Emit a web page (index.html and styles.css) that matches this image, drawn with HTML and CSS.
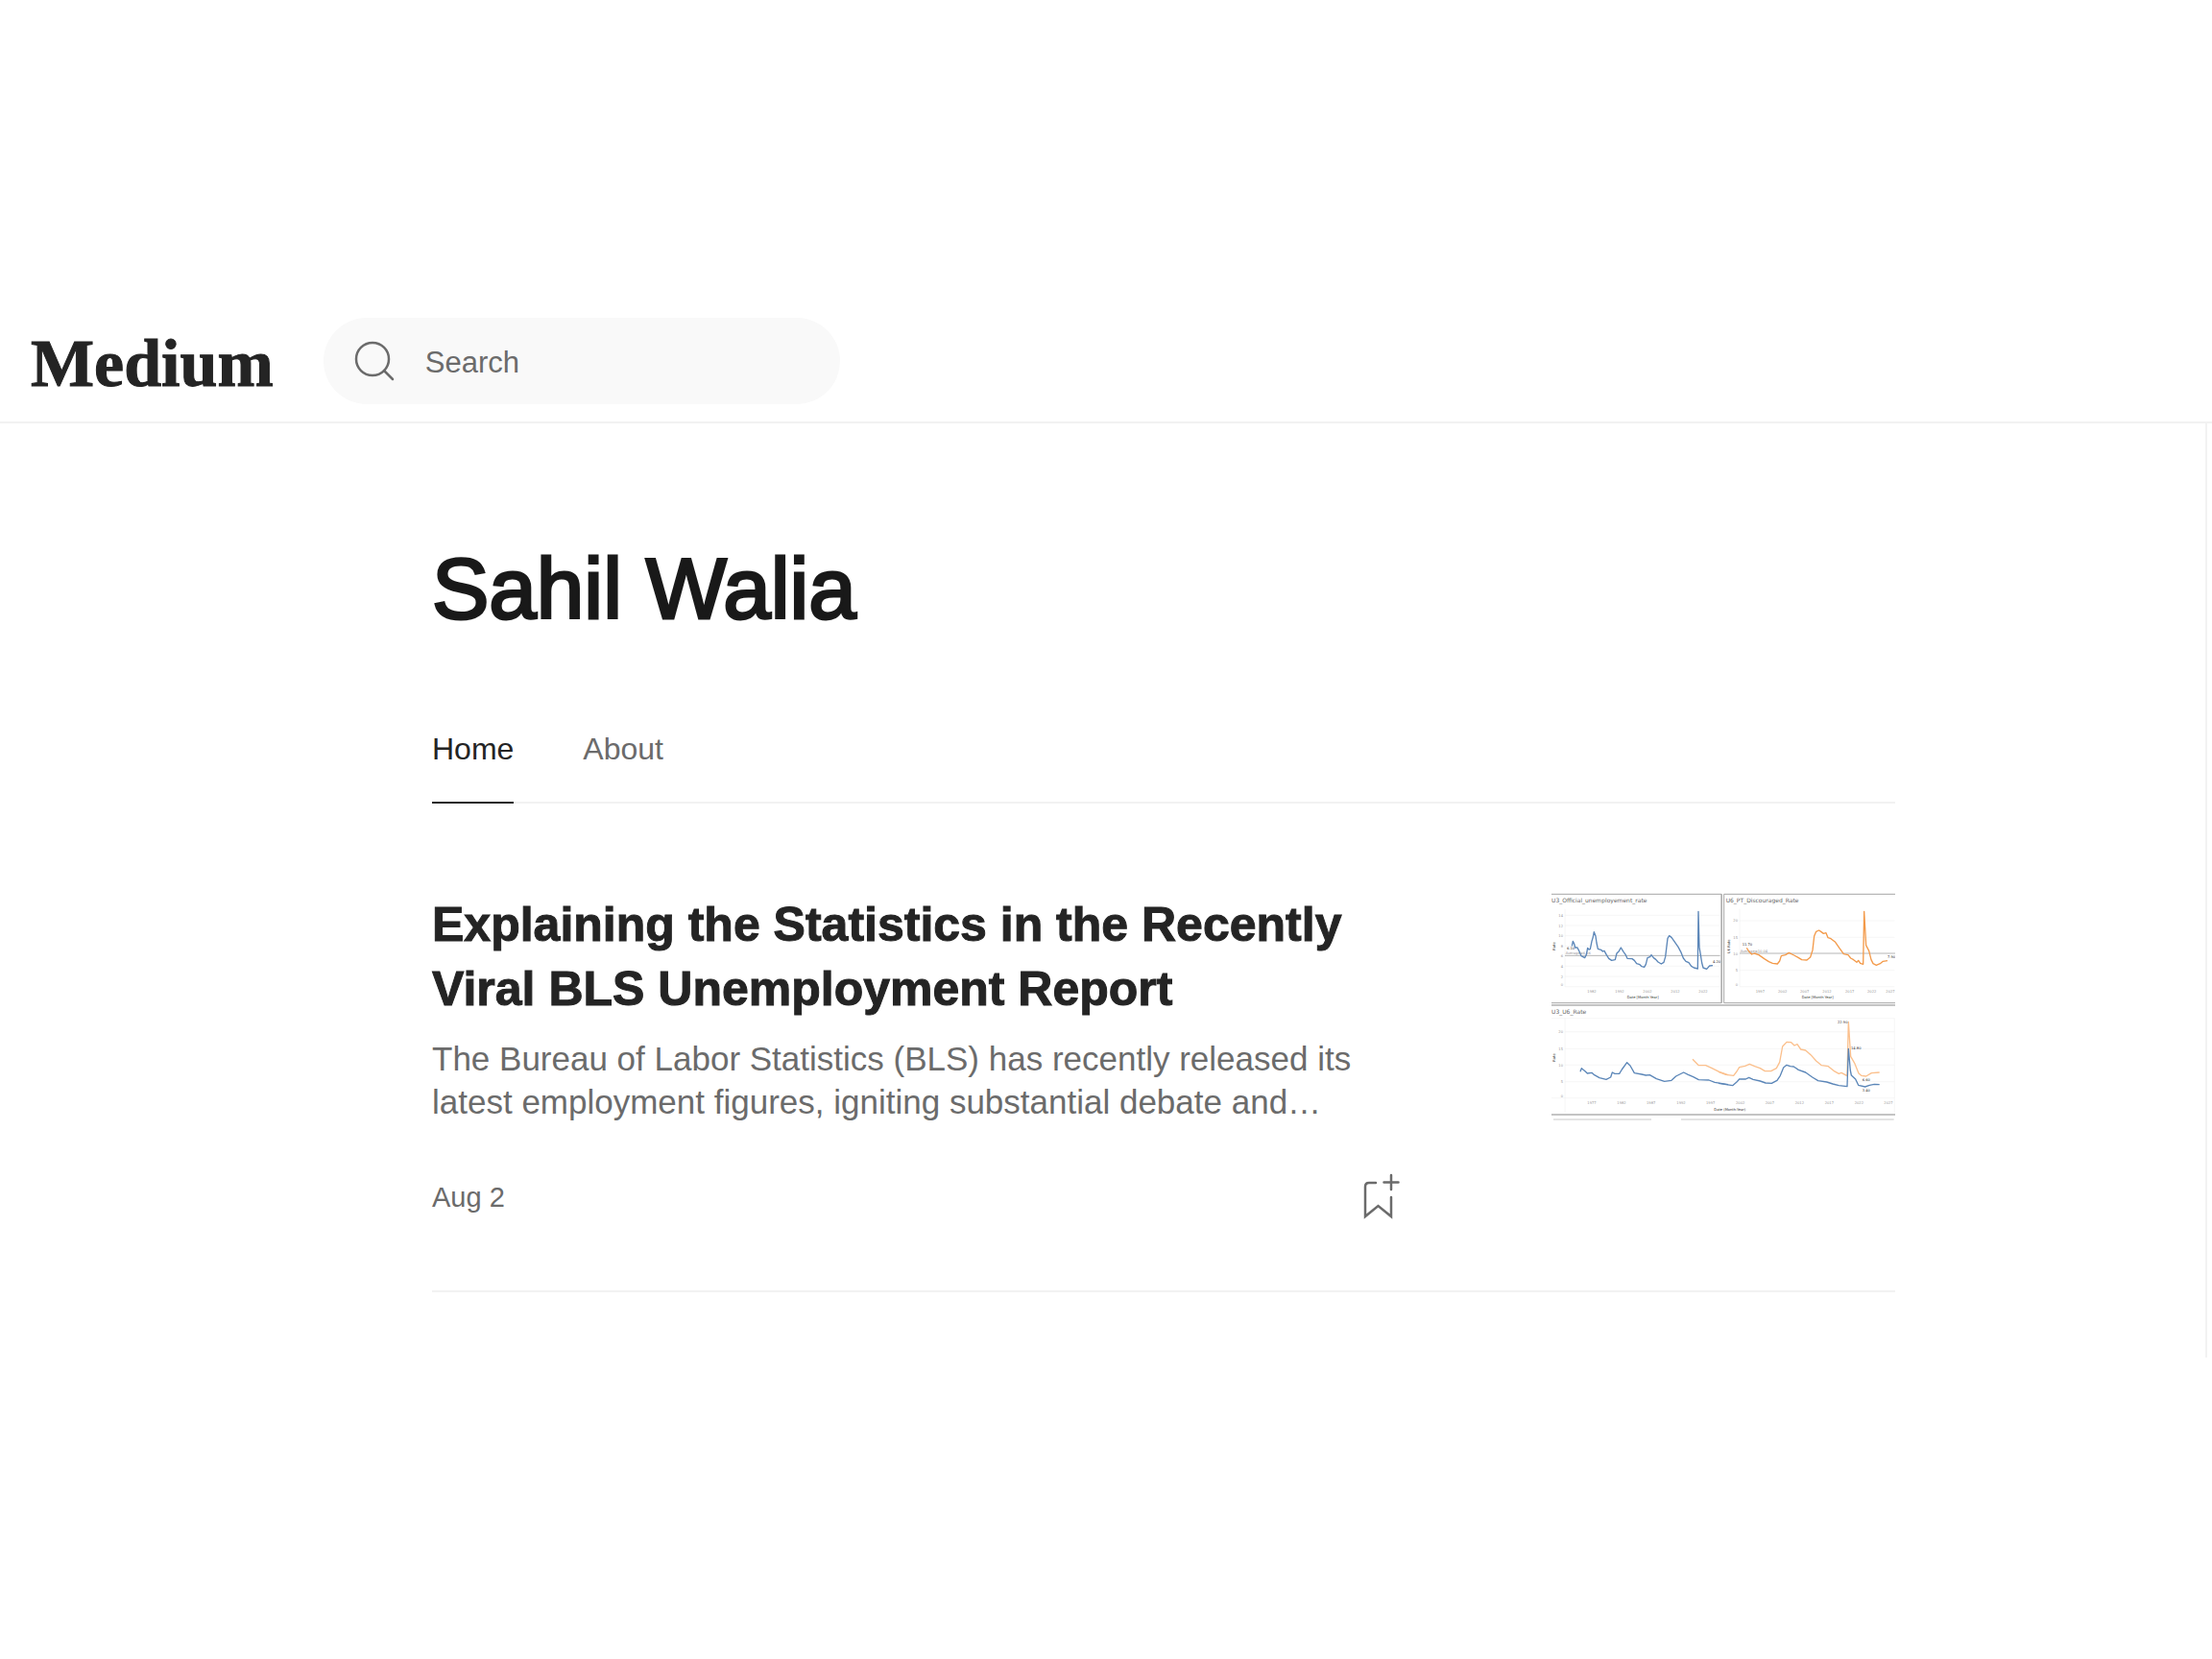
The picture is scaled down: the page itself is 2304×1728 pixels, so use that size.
FILE: index.html
```html
<!DOCTYPE html>
<html lang="en">
<head>
<meta charset="utf-8">
<title>Sahil Walia – Medium</title>
<link rel="stylesheet" href="styles.css">
</head>
<body>
<header class="topbar">
  <a class="wordmark" href="#">Medium</a>
  <label class="search">
    <svg class="search-icon" viewBox="0 0 42 42" aria-hidden="true"><circle cx="19" cy="19" r="17"/><path d="M31 31l9 9"/></svg>
    <input class="search-input" type="search" placeholder="Search" aria-label="Search">
  </label>
</header>
<main class="profile">
  <h1 class="name">Sahil Walia</h1>
  <nav class="tabs">
    <a class="tab tab-active" href="#" aria-current="page">Home</a>
    <a class="tab" href="#">About</a>
  </nav>
  <article class="story">
    <div class="story-text">
      <h2 class="story-title">Explaining the Statistics in the Recently<br>Viral BLS Unemployment Report</h2>
      <p class="story-summary">The Bureau of Labor Statistics (BLS) has recently released its<br>latest employment figures, igniting substantial debate and…</p>
      <div class="story-meta">
        <time datetime="08-02">Aug 2</time>
        <button class="save" type="button" aria-label="Save story">
          <svg viewBox="0 0 40 50" aria-hidden="true"><path d="M15 10H8q-4 0-4 4v31L17.500 34 31 45V25M31 2v15M23.500 9.500h15"/></svg>
        </button>
      </div>
    </div>
    <svg class="thumb" viewBox="0 0 1074 714" role="img" aria-label="Unemployment rate charts">
      <!-- U3 chart -->
      <g transform="translate(-48 -30)">
        <path class="frame" d="M48 34H579V374H48"/>
        <path class="grid" d="M90 100H575M90 132H575M90 164H575M90 196H575M90 259H575M90 291H575M90 323H575M90 80V323"/>
        <path class="avg" d="M90 226H575"/>
        <text class="head" x="48" y="60">U3_Official_unemployement_rate</text>
        <g class="tick"><text x="70" y="105">14</text><text x="70" y="137">12</text><text x="70" y="169">10</text><text x="77" y="201">8</text><text x="77" y="232">6</text><text x="77" y="264">4</text><text x="77" y="296">2</text><text x="77" y="320">0</text>
        <text x="160" y="341">1982</text><text x="247" y="341">1992</text><text x="334" y="341">2002</text><text x="421" y="341">2012</text><text x="508" y="341">2022</text></g>
        <g class="note"><text x="284" y="361">Date [Month Year]</text><text x="96" y="206">6.10</text><text class="faint" x="92" y="221">Average=6.16</text><text x="552" y="249">4.20</text><text transform="translate(61 209) rotate(-90)">Rate</text></g>
        <path class="blue" d="M112 196L115 181 119 189 122 201 129 201 134 211 141 227 152 233 157 223 161 202 165 207 169 206 174 181 178 168 181 152 186 165 189 186 193 205 203 208 208 213 213 211 220 224 227 235 236 241 247 239 252 219 259 212 265 201 273 214 280 224 285 235 300 236 307 241 314 251 324 254 330 260 338 262 343 253 348 233 356 230 360 224 367 233 374 238 381 246 391 252 399 247 404 230 407 205 411 172 416 164 423 169 432 182 444 199 452 214 460 234 468 244 477 248 485 259 493 264 505 267 507 88 510 200 514 224 518 249 522 264 533 268 542 258 552 257"/>
      </g>
      <!-- U6 chart -->
      <g transform="translate(522 -30)">
        <path class="frame" d="M10 34V374M554 34H17V374H554"/>
        <path class="grid" d="M66 117H550M66 169H550M66 272H550M66 323H550M66 80V323"/>
        <path class="avg" d="M66 219H552"/>
        <text class="head" x="23" y="60">U6_PT_Discouraged_Rate</text>
        <g class="tick"><text x="46" y="121">20</text><text x="46" y="173">15</text><text x="46" y="224">10</text><text x="53" y="276">5</text><text x="53" y="320">0</text>
        <text x="116" y="341">1997</text><text x="186" y="341">2002</text><text x="255" y="341">2007</text><text x="325" y="341">2012</text><text x="396" y="341">2017</text><text x="465" y="341">2022</text><text x="523" y="341">2027</text></g>
        <g class="note"><text x="260" y="361">Date [Month Year]</text><text x="74" y="196">11.70</text><text class="faint" x="68" y="215">Average=10.04</text><text x="528" y="234">7.90</text><text transform="translate(37 219) rotate(-90)">U6 Rate</text></g>
        <path class="orange" d="M88 202L95 213 104 222 112 219 126 224 143 236 157 245 169 250 184 252 191 243 196 227 209 224 220 217 236 225 249 232 260 239 276 240 287 231 294 209 299 165 305 151 314 147 321 152 328 157 336 155 342 170 351 173 365 184 378 203 391 221 405 224 413 234 422 239 432 247 437 241 443 250 452 253 455 88 461 194 470 211 477 239 483 251 493 256 505 251 514 244 528 242"/>
      </g>
      <path class="bar" d="M0 351H1074M0 693H1074"/>
      <path class="bar-light" d="M6 708H312M405 708H1070"/>
      <!-- Combined chart, left and right halves -->
      <g transform="translate(-48 330)">
        <path class="grid" d="M48 62H1120M90 104H1120M90 157H1120M90 208H1120M90 260H1120M48 311H1120M90 62V358M1120 62V358"/>
        <text class="head" x="48" y="48">U3_U6_Rate</text>
        <g class="tick"><text x="70" y="109">20</text><text x="70" y="161">15</text><text x="70" y="213">10</text><text x="77" y="264">5</text><text x="77" y="308">0</text>
        <text x="160" y="329">1977</text><text x="253" y="329">1982</text><text x="345" y="329">1987</text><text x="439" y="329">1992</text><text x="531" y="329">1997</text></g>
        <g class="note"><text x="556" y="350">Date (Month-Year)</text><text transform="translate(61 197) rotate(-90)">Rate</text></g>
        <path class="blue" d="M138 229L142 218 153 227 160 234 174 232 182 239 198 248 219 253 233 246 238 231 246 235 260 235 268 222 284 200 294 210 307 233 330 237 343 240 355 239 376 251 401 259 423 256 437 243 461 231 475 238 491 245 508 254 540 255 558 262 600 269"/>
        <path class="peach" d="M489 190L508 209 530 209 548 217 572 229 600 239"/>
      </g>
      <g transform="translate(522 330)">
        <g class="tick"><text x="54" y="329">2002</text><text x="146" y="329">2007</text><text x="239" y="329">2012</text><text x="332" y="329">2017</text><text x="425" y="329">2022</text><text x="517" y="329">2027</text></g>
        <path class="peach" d="M0 229L23 238 47 241 57 228 65 215 83 211 97 205 113 212 130 218 145 227 164 227 181 218 191 199 200 150 213 136 227 137 237 147 246 143 257 159 272 162 288 176 305 195 322 209 343 212 360 226 376 235 384 232 402 242 406 73 413 181 425 202 438 234 446 241 461 243 478 233 503 231"/>
        <path class="blue" d="M0 265L24 269 44 272 56 262 65 252 85 252 95 247 108 253 130 258 147 264 166 265 183 256 193 241 203 216 213 208 224 212 235 213 250 223 272 231 293 246 311 257 338 261 357 267 376 272 402 275 406 157 412 225 415 240 428 252 437 271 458 276 472 271 487 268 503 269"/>
        <g class="note"><text x="372" y="78">22.90</text><text x="414" y="159">14.80</text><text x="449" y="259">6.60</text><text x="449" y="292">3.40</text></g>
      </g>
    </svg>
  </article>
</main>
</body>
</html>
```
FILE: styles.css
```css
* { box-sizing: border-box; }
body {
  margin: 0;
  padding-top: 313px;
  background: #fff;
  color: #242424;
  font-family: "Liberation Sans", Arial, sans-serif;
}
a { color: inherit; text-decoration: none; }
.topbar {
  display: flex;
  align-items: center;
  gap: 52px;
  padding: 18px 32px;
  border-bottom: 2px solid #f2f2f2;
}
.wordmark {
  padding-top: 6px;
  font: bold 70px/84px "Liberation Serif", "Times New Roman", serif;
  -webkit-text-stroke: 1px #242424;
}
.search {
  display: flex;
  align-items: center;
  gap: 32px;
  width: 538px;
  height: 90px;
  padding: 0 32px;
  border-radius: 45px;
  background: #f9f9f9;
}
.search-icon {
  flex: none;
  width: 42px;
  height: 42px;
  fill: none;
  stroke: #6b6b6b;
  stroke-width: 2.500;
  stroke-linecap: round;
}
.search-input {
  flex: 1;
  min-width: 0;
  padding: 4px 0 0;
  border: 0;
  outline: 0;
  background: none;
  color: #242424;
  font: 31px/44px "Liberation Sans", Arial, sans-serif;
}
.search-input::placeholder { color: #6b6b6b; opacity: 1; }
.profile {
  margin-right: 5px;
  padding: 120px 323px 68px 450px;
  border-right: 2px solid #f2f2f2;
}
.name {
  margin: 0;
  color: #191919;
  font-size: 89px;
  font-weight: 400;
  line-height: 104px;
  -webkit-text-stroke: 3px #191919;
}
.tabs {
  display: flex;
  gap: 72px;
  margin-top: 93px;
  border-bottom: 2px solid #f2f2f2;
}
.tab {
  margin-bottom: -2px;
  padding-bottom: 33px;
  border-bottom: 2px solid transparent;
  color: #6b6b6b;
  font-size: 32px;
  line-height: 44px;
}
.tab-active { border-color: #242424; color: #242424; }
.story {
  display: flex;
  align-items: flex-start;
  justify-content: space-between;
  gap: 158px;
  padding: 93px 0 70px;
  border-bottom: 2px solid #f2f2f2;
}
.story-text { flex: 1; }
.story-title {
  margin: 0;
  font-size: 50px;
  line-height: 67px;
  -webkit-text-stroke: 1px #242424;
}
.story-summary {
  margin: 16px 0 50px;
  color: #6b6b6b;
  font-size: 35px;
  line-height: 45px;
}
.story-meta {
  display: flex;
  align-items: center;
  justify-content: space-between;
  height: 54px;
  color: #6b6b6b;
  font-size: 29px;
  line-height: 40px;
}
.save { width: 40px; height: 50px; padding: 0; border: 0; background: none; }
.save svg {
  display: block;
  width: 40px;
  height: 50px;
  fill: none;
  stroke: #6b6b6b;
  stroke-width: 2.500;
  stroke-linecap: round;
}
.thumb {
  flex: none;
  width: 358px;
  height: 238px;
  fill: none;
  font-family: "DejaVu Sans", sans-serif;
}
.frame { stroke: #a6a6a6; stroke-width: 3; }
.grid { stroke: #f1f1f1; stroke-width: 2; }
.avg { stroke: #b5b5b5; stroke-width: 3; }
.bar { stroke: #c4c4c4; stroke-width: 6; }
.bar-light { stroke: #dcdcdc; stroke-width: 4; }
.head { fill: #666; font-size: 18px; }
.tick { fill: #999; font-size: 11px; }
.note { fill: #333; font-size: 11px; }
.faint { fill: #999; }
.blue, .orange, .peach { stroke-width: 4; stroke-linejoin: round; }
.blue { stroke: #5b86b8; }
.orange { stroke: #f39a4a; }
.peach { stroke: #fbc08d; }
```
